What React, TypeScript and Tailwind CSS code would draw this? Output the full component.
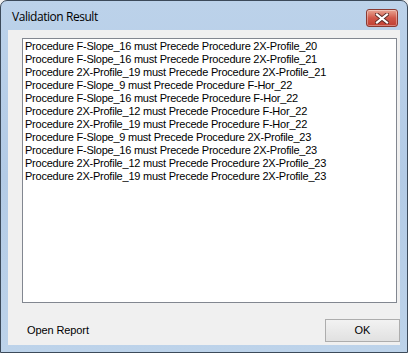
const lines = [
  "Procedure F-Slope_16 must Precede Procedure 2X-Profile_20",
  "Procedure F-Slope_16 must Precede Procedure 2X-Profile_21",
  "Procedure 2X-Profile_19 must Precede Procedure 2X-Profile_21",
  "Procedure F-Slope_9 must Precede Procedure F-Hor_22",
  "Procedure F-Slope_16 must Precede Procedure F-Hor_22",
  "Procedure 2X-Profile_12 must Precede Procedure F-Hor_22",
  "Procedure 2X-Profile_19 must Precede Procedure F-Hor_22",
  "Procedure F-Slope_9 must Precede Procedure 2X-Profile_23",
  "Procedure F-Slope_16 must Precede Procedure 2X-Profile_23",
  "Procedure 2X-Profile_12 must Precede Procedure 2X-Profile_23",
  "Procedure 2X-Profile_19 must Precede Procedure 2X-Profile_23",
];

function CloseButton() {
  return (
    <button className="absolute left-[366px] top-[9px] w-[32px] h-[18px] rounded-[3px] border border-[#8a3a32] bg-gradient-to-b from-[#e8a493] via-[#d0584a] to-[#c13f32] flex items-center justify-center shadow-[inset_0_0_0_1px_rgba(255,255,255,0.35)]">
      <svg width="14" height="11" viewBox="0 0 14 11">
        <path d="M2 1.5 L12 9.5 M12 1.5 L2 9.5" stroke="#5a2a26" strokeWidth="4" strokeLinecap="square" />
        <path d="M2 1.5 L12 9.5 M12 1.5 L2 9.5" stroke="#ffffff" strokeWidth="2.2" strokeLinecap="square" />
      </svg>
    </button>
  );
}

export default function App() {
  return (
    <div className="w-[408px] h-[353px] relative bg-[#f0f0f0] font-['Liberation_Sans',Arial,sans-serif]">
      <div className="w-[408px] h-[353px] flex flex-col border border-[#3c4a5a] rounded-t-[7px] bg-gradient-to-b from-[#bcd2ea] via-[#b3cbe6] to-[#bdd3ea] overflow-hidden">
        <div className="h-[29px] shrink-0 flex items-center pl-[11px] pt-[3px]">
          <span className="text-[12px] text-black font-['Open_Sans','Liberation_Sans',sans-serif] tracking-[-0.45px]">Validation Result</span>
        </div>
        <div className="flex-1 mx-[7px] mb-[7px] bg-[#f0f0f0] flex flex-col pt-[8px] pl-[14px] pr-[3px] pb-[3px]">
          <div className="h-[265px] border border-[#828790] bg-white pl-[2px] pt-[1px]">
            {lines.map((l, i) => (
              <div key={i} className="h-[13px] leading-[13px] text-[11px] text-black whitespace-nowrap tracking-[-0.23px]">
                {l}
              </div>
            ))}
          </div>
          <div className="flex-1 flex items-end justify-between">
            <span className="text-[11px] text-black ml-[5px] mb-[4px] tracking-[-0.1px]">Open Report</span>
            <button className="w-[75px] h-[23px] mr-[-3px] border border-[#adadad] bg-gradient-to-b from-[#f2f2f2] to-[#e1e1e1] text-[11px] text-black flex items-center justify-center">
              OK
            </button>
          </div>
        </div>
      </div>
      <CloseButton />
    </div>
  );
}
